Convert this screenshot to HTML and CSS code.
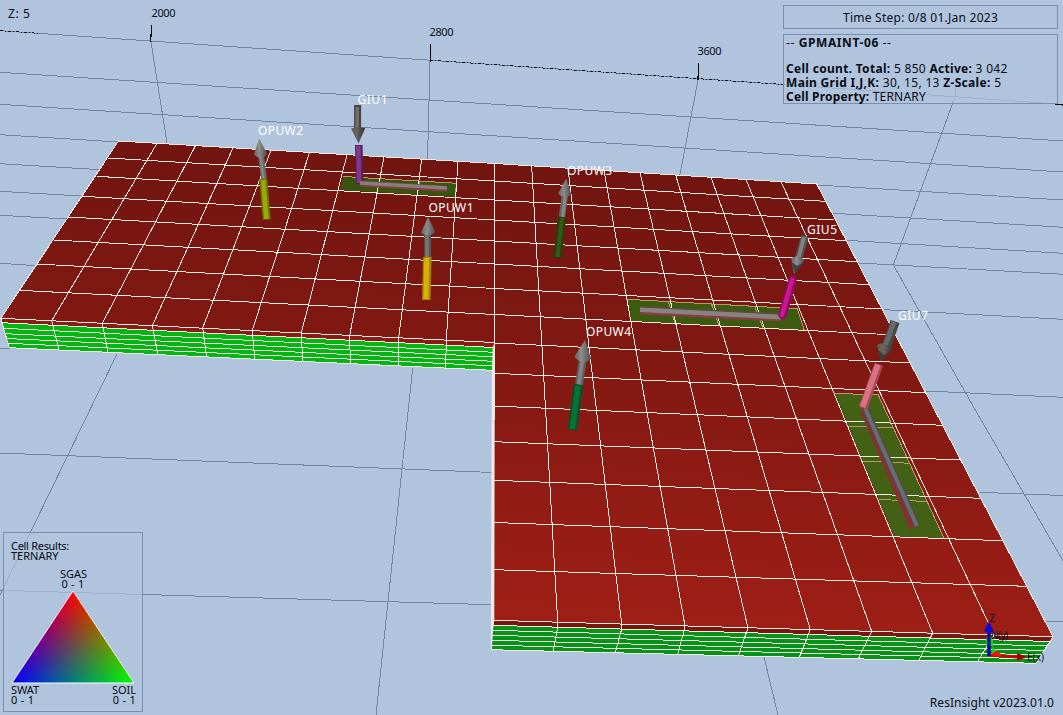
FILE: index.html
```
<!DOCTYPE html>
<html lang="en">
<head>
<meta charset="utf-8">
<title>ResInsight</title>
<link rel="stylesheet" href="styles.css">
</head>
<body>
<main class="viewport">
<svg class="scene" width="1063" height="715" viewBox="0 0 1063 715">
  <defs>
    <linearGradient id="top" gradientUnits="userSpaceOnUse" x1="620" y1="150" x2="590" y2="640">
      <stop offset="0" stop-color="#701410"/><stop offset=".4" stop-color="#801812"/><stop offset="1" stop-color="#a01f16"/>
    </linearGradient>
    <linearGradient id="steel"><stop offset="0" stop-color="#606060"/><stop offset=".4" stop-color="#8d8d8d"/><stop offset="1" stop-color="#4c4c4c"/></linearGradient>
    <linearGradient id="dark"><stop offset="0" stop-color="#5d5955"/><stop offset=".4" stop-color="#68645e"/><stop offset="1" stop-color="#302f2d"/></linearGradient>
  </defs>

  <!-- background box grid -->
  <g class="backgrid">
    <path d="M0 30.7L783 84.5L1063 104.5M0 72.3L1063 141M0 104.3L830 157.3L1063 172M0 134.7L817 185L1063 200M0 163.7L833 213.3L1063 227.3M0 191.3L846 240.3L1063 253.3M0 215.3L859 263L1063 274.3"/>
    <path d="M0 263.3L37 265.7M884 309.7L1063 319.3M0 348.3L10 348.3M926 391L1063 397.3M0 453L493 472.5M980 492.3L1063 495.5M0 590.3L491 604.7M1046 621H1063"/>
    <path d="M151 42L167 143M430 62L427.5 160M698 80L679.7 176M955 86V97L893.3 265L975.3 410L1063 560.7M117 354L0 595M412.7 368L376 715M764 657L778 715"/>
  </g>
  <path class="axis" d="M151.8 25L150.5 42M430.5 44V62M698.5 63L698 80M1055 104.3L1063 105"/>
  <path class="axis zdash" d="M0 30.7L40 33.4"/>
  <path class="axis zdash" d="M430 60.2L783 84.5"/>

  <!-- top surface and sides -->
  <path fill="url(#top)" d="M118.5 141L494.7 163.5L816.7 184L1053 636.7L493.3 620.3L494.3 342.5L1 318.3Z"/>
  <path fill="#8c1a16" d="M1 318.3L494.3 342.5V348L2 323Z"/>
  <path fill="#05b513" d="M2 322.7L494 347.5L492.7 370.3L9.3 347.7Z"/>
  <path fill="#781612" d="M493.3 620.3L1053 636.7L1050 641.5L493 625.3Z"/>
  <path fill="#07921a" d="M493 625.3L1050 641.5L1036 663.3L491 649.7Z"/>

  <!-- perforated cells -->
  <g fill="#38540f">
    <path d="M343.3 177L456.7 183.3L455 196.7L340 190Z"/>
    <path fill="#3d5b10" d="M627.3 299.3L797.3 308.7L804.3 330.3L631.7 321Z"/>
    <path fill="#436114" d="M834.7 393.3L878.3 395L944 538.3L894 536Z"/>
  </g>
  <path class="inner" d="M343.3 176.5L456.7 183.3L455 196M380 178.5L377 192M419.5 181L417.5 194.5M627.3 299.3L797.3 308.7L804.3 330.3M668.5 302L675 323.3M711.5 304L719 325.5M754.5 306L763 328M834.7 393.3L878.3 395L944 538.3M848.5 426.5L894 427.5M863 461L910 463.3M879 499.5L928 501.5"/>

  <g class="mesh">
    <path d="M118.5 141L494.7 163.5L816.7 184L1053 636.7L493.3 620.3L494.3 342.5L1 318.3Z"/>
    <path d="M107.7 158L494.7 181L825 201.3M96.7 176.3L494.7 200L834.3 220M82.3 196.3L494.7 220L846.3 240.7M67.7 217L494.7 241L857.3 261.7M54 240L494.7 264L869.3 284.7M36.7 264L494.7 288.5L883.3 309M19 290.3L494.7 314.5L896 335M494.3 343L910.7 363M494 373.3L926 392.7M494 406L943.3 425.3M494 441.7L961 460M494 480.3L980.7 498.3M494 522.5L1002.7 540.7M494 569.7L1027 586.3"/>
    <path d="M157 143.3L51.7 320.8L59 350M195.5 145.7L102.3 323.3L108 352.3M233 148L152.3 325.7L158 354.6M271 150.2L202.7 328L206.7 357M309.5 152.6L252.3 330.4L254.7 359.2M347 154.8L301.3 333L302.7 361.4M384 157L349.7 335.3L350.3 363.7M421.7 159.2L398.7 337.7V366M458 161.4L446.3 340L445.7 368M494.7 163.5L494.3 342.5"/>
    <path d="M531.7 166L557.7 622.2V627L553.3 651.3M568 168.2L621.7 624.1V629L615.3 652.8M604 170.4L685 626L684 631L677.7 654.4M640 172.8L748 627.8L738.3 655.9M675.7 175L810.3 629.6L799.3 657.4M711 177.2L871.7 631.4L858.3 658.9M746 179.5L932.7 633.2L918.7 660.4M781 181.8L994 635L977.3 661.8"/>
    <path d="M1 318.3L2 322.7L494 347.5M2 322.7L9.3 347.7L492.7 370.3M3.5 328.3L494 352.3M5 333.7L494 356.8M6.5 338.5L493 361.3M8 343.3L493 365.8"/>
    <path d="M493 625.3L1050 641.5M493 630.3L1047 646M492.5 635.3L1044 650.5M492 640.3L1041.5 655M491.5 645.2L1039 659M491 649.7L1036 663.3L1053 636.7"/>
  </g>
  <path fill="#eeeaea" d="M494.8 343V348L494.3 620L493 630L491.8 650H490.8L491.8 372L492.8 347Z"/>

  <!-- producer and injector wells -->
  <g class="pipe">
    <path stroke="#686868" stroke-width="6" d="M261 155L264 179"/><path stroke="#858585" stroke-width="2.5" d="M260.5 155L263.5 179"/>
    <path stroke="#6c7605" stroke-width="8" d="M263.3 179L266.7 219.5"/><path stroke="#98a908" stroke-width="4.5" d="M263.2 180L266.4 219"/>
    <path fill="url(#steel)" d="M259.3 138.5L267.2 154L264 157L258 157.5L253.8 154.5Z"/>
    <path stroke="#474542" stroke-width="7" d="M357.6 105V130"/><path stroke="#74706b" stroke-width="3.5" d="M357.2 107V130"/>
    <path fill="url(#dark)" d="M351 128.5L357 127L365.2 128L358.5 143.5Z"/>
    <path stroke="#55205e" stroke-width="7.6" d="M358.8 145L359.7 184"/><path stroke="#813889" stroke-width="4.5" d="M358.3 146L359.2 183"/>
    <path stroke="#873d43" stroke-width="6" d="M360 183.6L447 188.7"/><path stroke="#858080" stroke-width="3.5" d="M360 183L447 188"/>
    <path stroke="#535353" stroke-width="7" d="M427.7 234V258"/><path stroke="#747474" stroke-width="4" d="M427 234V257"/>
    <path stroke="#a88404" stroke-width="8.5" d="M427.3 257L426.3 300"/><path stroke="#d6b006" stroke-width="5" d="M426.7 258L426 299"/>
    <path fill="url(#steel)" d="M428 217L435.3 232L431 235H425L421 233Z"/>
    <path stroke="#656565" stroke-width="6.5" d="M565 194L562 217"/><path stroke="#898989" stroke-width="3" d="M565.5 194L562.5 217"/>
    <path stroke="#273f0a" stroke-width="8.5" d="M562 217L557.5 258"/><path stroke="#355914" stroke-width="4" d="M562 218L557.5 257"/>
    <path fill="url(#steel)" d="M566.3 178.5L571.5 195L567 197L561 196L558 193.5Z"/>
    <path stroke="#525555" stroke-width="7.5" d="M805 236L798 260"/><path stroke="#7e8282" stroke-width="4" d="M804 237L798 260"/>
    <path fill="url(#steel)" d="M791 258L798 256L804.5 260L794 274Z"/><path fill="#404242" d="M791.5 262L797 266L803.5 262.5L795 273.5Z"/>
    <path stroke="#873d43" stroke-width="8" d="M640 310.5L781 317.5"/><path stroke="#888383" stroke-width="5" d="M640 309.5L781 317"/><path stroke="#5e4945" stroke-width="1.2" d="M640 307L781 314"/>
    <path stroke="#8e0b60" stroke-width="8.5" stroke-linecap="round" d="M792.5 280L782.5 315"/><path stroke="#cc1793" stroke-width="4.5" stroke-linecap="round" d="M792 280L782 315"/>
    <path stroke="#474949" stroke-width="9.5" d="M895 321.5L886.5 346"/><path stroke="#666969" stroke-width="5" d="M894 322L885 346"/>
    <path fill="url(#dark)" d="M877 344.5L883 343L893.5 348L880.7 361Z"/><path fill="#3b3c3b" d="M878 350L884 355L892 350L880.7 361Z"/>
    <path stroke="#8e2d32" stroke-width="8.5" d="M863.5 408L914 528"/><path stroke="#4c4c4c" stroke-width="7" d="M865 408L917 526"/><path stroke="#6c6c70" stroke-width="4" d="M865 408L917 526"/>
    <path stroke="#a34c58" stroke-width="9" d="M878.8 364.5L863 408"/><path stroke="#dc7186" stroke-width="5.5" d="M878 364.5L862.5 407"/>
    <path stroke="#5d5d5d" stroke-width="8" d="M583 358L579 385"/><path stroke="#818181" stroke-width="4" d="M582.7 358L578.7 385"/>
    <path stroke="#055329" stroke-width="9.5" d="M578.5 384.5L572.3 430"/><path stroke="#067335" stroke-width="5.5" d="M578 386L572.3 429"/>
    <path fill="url(#steel)" d="M585 340L591.3 359L586 362L579 361L574.3 357Z"/>
  </g>

  <g class="well">
    <text x="258" y="135" textLength="45">OPUW2</text><text x="357.5" y="104" textLength="30">GIU1</text>
    <text x="428.5" y="212" textLength="45">OPUW1</text><text x="567" y="175" textLength="45">OPUW3</text>
    <text x="807" y="234" textLength="30">GIU5</text><text x="898" y="320" textLength="30">GIU7</text>
    <text x="586" y="336" textLength="45">OPUW4</text>
  </g>
  <g class="tick">
    <text x="151.5" y="17" textLength="24">2000</text><text x="429.5" y="36" textLength="24">2800</text><text x="697.5" y="55" textLength="24">3600</text>
  </g>

  <!-- orientation cross -->
  <path fill="#14d51a" d="M985.5 640L989 633L993 640V646L991 655L997 651L992 646H987Z"/>
  <path stroke="#c30808" stroke-width="3" d="M989 655L1018 657"/><path fill="#f01010" d="M990 655L996 651L1001 654V657Z"/><path fill="#990505" d="M1017 653L1027.5 657.3L1017 660.5Z"/>
  <path stroke="#0909a0" stroke-width="3.5" d="M989 656V631"/><path fill="#0808df" d="M984 631L989 621.5L993.5 631L989 633Z"/>
  <g class="orient"><text x="989.5" y="622">Z</text><text x="991" y="639" textLength="17">N(y)</text><text x="1027" y="661" textLength="17">E(x)</text></g>
</svg>

<p class="zscale">Z: 5</p>
<div class="info">
  <div class="box step">Time Step: 0/8 01.Jan 2023</div>
  <div class="box details">
    <p class="l1">-- <b>GPMAINT-06</b> --</p>
    <p class="l2"><b>Cell count. Total:</b> 5 850 <b>Active:</b> 3 042</p>
    <p class="l3"><b>Main Grid I,J,K:</b> 30, 15, 13 <b>Z-Scale:</b> 5</p>
    <p class="l4"><b>Cell Property:</b> TERNARY</p>
  </div>
</div>

<section class="legend box">
  <p class="title">Cell Results:</p>
  <p>TERNARY</p>
  <p class="sgas">SGAS</p>
  <p class="range">0 - 1</p>
  <svg class="ternary" width="124" height="94" viewBox="0 0 124 94">
    <defs>
      <linearGradient id="r" gradientUnits="userSpaceOnUse" x1="62" y1="93" x2="62" y2="1"><stop stop-color="#000"/><stop offset="1" stop-color="#f00"/></linearGradient>
      <linearGradient id="g" gradientUnits="userSpaceOnUse" x1="38.2" y1="36.8" x2="123" y2="93"><stop stop-color="#000"/><stop offset="1" stop-color="#0f0"/></linearGradient>
      <linearGradient id="b" gradientUnits="userSpaceOnUse" x1="85.8" y1="36.8" x2="1" y2="93"><stop stop-color="#000"/><stop offset="1" stop-color="#00f"/></linearGradient>
    </defs>
    <path fill="url(#r)" d="M62 1L123 93H1Z"/><path class="add" fill="url(#g)" d="M62 1L123 93H1Z"/><path class="add" fill="url(#b)" d="M62 1L123 93H1Z"/>
    <path fill="none" stroke="#fff" d="M62 1L123 93H1Z"/>
  </svg>
  <div class="ends">
    <div><p>SWAT</p><p class="num">0 - 1</p></div>
    <div class="soil"><p>SOIL</p><p class="num">0 - 1</p></div>
  </div>
</section>
<p class="version">ResInsight v2023.01.0</p>
</main>
</body>
</html>
```

FILE: styles.css
```
body { margin: 0; overflow: hidden; }
p { margin: 0; }
.viewport { position: relative; width: 1063px; height: 715px; overflow: hidden; background: #b0c4de; color: #080c14; font-family: "Noto Sans", sans-serif; }
.scene { display: block; }
.backgrid { fill: none; stroke: #7287a4; shape-rendering: crispEdges; }
.axis { fill: none; stroke: #05080c; stroke-width: 1.2; shape-rendering: crispEdges; }
.zdash { stroke-width: 1; stroke-dasharray: 3 2 1 2; }
.mesh { fill: none; stroke: #f3eadf; shape-rendering: crispEdges; }
.inner { fill: none; stroke: #b59b65; shape-rendering: crispEdges; }
.pipe { fill: none; }
.well { fill: #fff; font-size: 12px; }
.tick { font-size: 11px; fill: #080c14; }
.orient { font-size: 10px; fill: #080c14; }
.box { box-sizing: border-box; border: 1px solid #7b8fac; background: rgba(176, 196, 222, .7); }
.zscale { position: absolute; left: 8px; top: 5px; font-size: 12px; line-height: 17px; letter-spacing: .6px; }
.info { position: absolute; left: 783px; top: 5px; width: 275px; display: flex; flex-direction: column; gap: 5px; font-size: 12px; line-height: 14px; white-space: nowrap; }
.step { height: 24px; text-align: center; line-height: 23px; letter-spacing: .25px; }
.details { height: 70px; padding: 1px 2px; }
.l1 { margin-bottom: 12px; letter-spacing: .6px; }
.l2 { letter-spacing: .3px; }
.l3 { letter-spacing: .32px; }
.l4 { letter-spacing: .19px; }
.legend { position: absolute; left: 3px; top: 532px; width: 140px; height: 180px; padding: 8px 7px 0; font-size: 11px; line-height: 10px; }
.title { letter-spacing: -.3px; }
.sgas { text-align: center; margin-top: 8px; padding-left: 1px; }
.range { text-align: center; letter-spacing: .2px; }
.num { letter-spacing: .3px; }
.ternary { display: block; margin-top: 1px; isolation: isolate; }
.add { mix-blend-mode: plus-lighter; }
.ends { display: flex; justify-content: space-between; margin-top: 1px; }
.soil { text-align: right; margin-right: -1px; }
.version { position: absolute; right: 9px; bottom: 4px; font-size: 12px; line-height: 17px; letter-spacing: .05px; }
```
